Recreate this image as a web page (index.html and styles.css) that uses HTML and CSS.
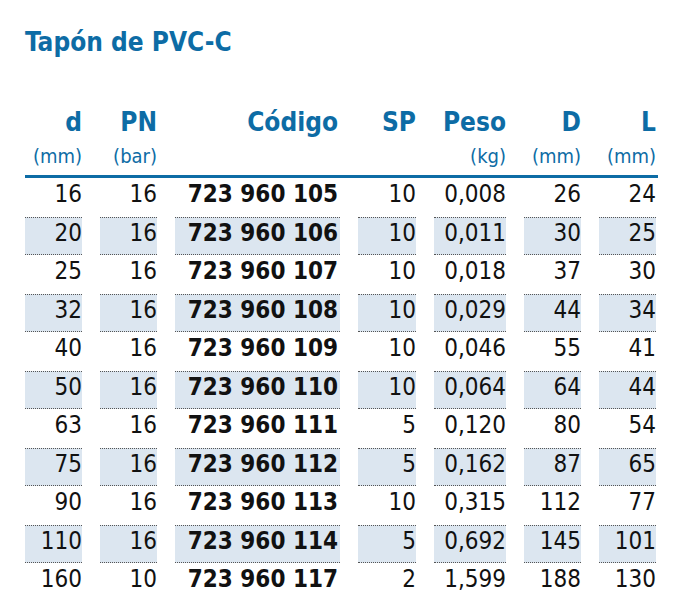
FILE: index.html
```html
<!DOCTYPE html>
<html lang="es">
<head>
<meta charset="utf-8">
<title>Tapón de PVC-C</title>
<link rel="stylesheet" href="styles.css">
</head>
<body>
<div class="page">
  <h1 class="title">Tapón de PVC-C</h1>
  <div class="table">
    <div class="row head">
      <div class="cell"><span class="lbl">d</span><span class="unit">(mm)</span></div>
      <div class="cell"><span class="lbl">PN</span><span class="unit">(bar)</span></div>
      <div class="cell code"><span class="lbl">Código</span><span class="unit">&nbsp;</span></div>
      <div class="cell"><span class="lbl">SP</span><span class="unit">&nbsp;</span></div>
      <div class="cell"><span class="lbl">Peso</span><span class="unit">(kg)</span></div>
      <div class="cell"><span class="lbl">D</span><span class="unit">(mm)</span></div>
      <div class="cell"><span class="lbl">L</span><span class="unit">(mm)</span></div>
    </div>
    <div class="rule"></div>
    <div class="row"><div class="cell">16</div><div class="cell">16</div><div class="cell code">723 960 105</div><div class="cell">10</div><div class="cell">0,008</div><div class="cell">26</div><div class="cell">24</div></div>
    <div class="row alt"><div class="cell">20</div><div class="cell">16</div><div class="cell code">723 960 106</div><div class="cell">10</div><div class="cell">0,011</div><div class="cell">30</div><div class="cell">25</div></div>
    <div class="row"><div class="cell">25</div><div class="cell">16</div><div class="cell code">723 960 107</div><div class="cell">10</div><div class="cell">0,018</div><div class="cell">37</div><div class="cell">30</div></div>
    <div class="row alt"><div class="cell">32</div><div class="cell">16</div><div class="cell code">723 960 108</div><div class="cell">10</div><div class="cell">0,029</div><div class="cell">44</div><div class="cell">34</div></div>
    <div class="row"><div class="cell">40</div><div class="cell">16</div><div class="cell code">723 960 109</div><div class="cell">10</div><div class="cell">0,046</div><div class="cell">55</div><div class="cell">41</div></div>
    <div class="row alt"><div class="cell">50</div><div class="cell">16</div><div class="cell code">723 960 110</div><div class="cell">10</div><div class="cell">0,064</div><div class="cell">64</div><div class="cell">44</div></div>
    <div class="row"><div class="cell">63</div><div class="cell">16</div><div class="cell code">723 960 111</div><div class="cell">5</div><div class="cell">0,120</div><div class="cell">80</div><div class="cell">54</div></div>
    <div class="row alt"><div class="cell">75</div><div class="cell">16</div><div class="cell code">723 960 112</div><div class="cell">5</div><div class="cell">0,162</div><div class="cell">87</div><div class="cell">65</div></div>
    <div class="row"><div class="cell">90</div><div class="cell">16</div><div class="cell code">723 960 113</div><div class="cell">10</div><div class="cell">0,315</div><div class="cell">112</div><div class="cell">77</div></div>
    <div class="row alt"><div class="cell">110</div><div class="cell">16</div><div class="cell code">723 960 114</div><div class="cell">5</div><div class="cell">0,692</div><div class="cell">145</div><div class="cell">101</div></div>
    <div class="row"><div class="cell">160</div><div class="cell">10</div><div class="cell code">723 960 117</div><div class="cell">2</div><div class="cell">1,599</div><div class="cell">188</div><div class="cell">130</div></div>
    <div class="row alt"><div class="cell">&nbsp;</div><div class="cell">&nbsp;</div><div class="cell code">&nbsp;</div><div class="cell">&nbsp;</div><div class="cell">&nbsp;</div><div class="cell">&nbsp;</div><div class="cell">&nbsp;</div></div>
  </div>
</div>
</body>
</html>
```
FILE: styles.css
```css
html, body {
  margin: 0;
  padding: 0;
  background: #ffffff;
  height: 600px;
  overflow: hidden;
}
.page {
  height: 600px;
  overflow: hidden;
  box-sizing: border-box;
  padding: 24px 0 0 25px;
  font-family: "DejaVu Sans Condensed", "DejaVu Sans", sans-serif;
  color: #111111;
}
.title {
  margin: 0;
  font-size: 26px;
  line-height: 36px;
  font-weight: bold;
  color: #0d6ca5;
}
.table {
  margin-top: 46px;
  width: 633px;
}
.row {
  display: grid;
  grid-template-columns: 57px 57px 165px 58px 72px 57px 57px;
  column-gap: 18px;
  height: 38.5px;
}
.row .cell {
  text-align: right;
  font-size: 24px;
  line-height: 33px;
}
.row .cell.code {
  font-weight: bold;
  padding-right: 2px;
}
.row.alt .cell {
  background: #dce6f0;
  border-top: 1px dotted #555555;
  border-bottom: 1px dotted #555555;
  line-height: 31px;
}
.head {
  height: auto;
}
.head .cell {
  display: flex;
  flex-direction: column;
  align-items: flex-end;
  color: #0d6ca5;
}
.head .lbl {
  font-size: 26px;
  font-weight: bold;
  line-height: 32px;
}
.head .unit {
  font-size: 20px;
  line-height: 36px;
}
.rule {
  height: 3px;
  background: #0d6ca5;
  margin-top: 1px;
}
```
